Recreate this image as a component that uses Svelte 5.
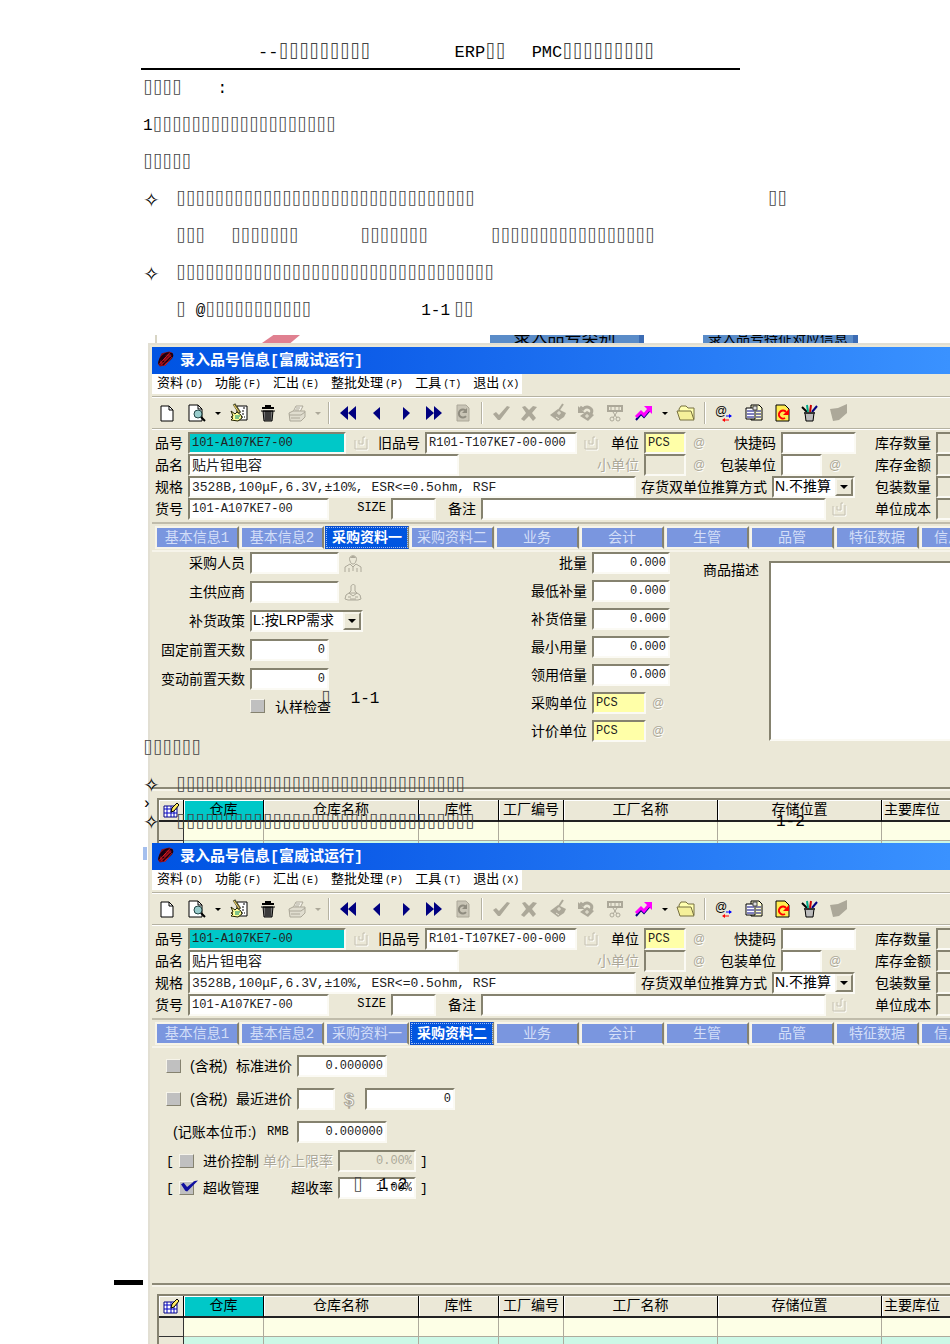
<script lang="ts">
	/**
	 * ERP manual page: document text with two pasted views of the
	 * item master window (purchasing tab one and tab two).
	 */

	interface Field {
		label: string;
		lw: number; // label width
		w: number; // control width
		value?: string;
		kind?: 'text' | 'key' | 'unit' | 'off' | 'select' | 'spec' | 'cjk';
		icon?: string;
		iw?: number; // icon slot width
		dim?: boolean;
		num?: boolean;
		latin?: boolean;
	}

	// Missing-glyph boxes, as the document prints them
	const box = (n: number) => '⌷'.repeat(n);

	const header = [
		{ gap: 258, text: '--', boxes: 9 },
		{ gap: 84, text: 'ERP', boxes: 2 },
		{ gap: 26, text: 'PMC', boxes: 9 }
	];

	interface Run {
		gap: number;
		text?: string;
		boxes?: number;
	}

	const lines: { bullet?: boolean; indent?: boolean; runs: Run[] }[] = [
		{ runs: [{ gap: 0, boxes: 4 }, { gap: 36, text: ':' }] },
		{ runs: [{ gap: 0, text: '1', boxes: 19 }] },
		{ runs: [{ gap: 0, boxes: 5 }] },
		{ bullet: true, runs: [{ gap: 0, boxes: 31 }, { gap: 293, boxes: 2 }] },
		{
			indent: true,
			runs: [
				{ gap: 0, boxes: 3 },
				{ gap: 26, boxes: 7 },
				{ gap: 62, boxes: 7 },
				{ gap: 63, boxes: 17 }
			]
		},
		{ bullet: true, runs: [{ gap: 0, boxes: 33 }] },
		{
			indent: true,
			runs: [
				{ gap: 0, boxes: 1 },
				{ gap: 10, text: '@', boxes: 11 },
				{ gap: 110, text: '1-1' },
				{ gap: 4, boxes: 2 }
			]
		}
	];

	const menus = [
		['资料', '(D)'],
		['功能', '(F)'],
		['汇出', '(E)'],
		['整批处理', '(P)'],
		['工具', '(T)'],
		['退出', '(X)']
	];

	const shapes: Record<string, string> = {
		new: '<path d="M4 3h8l4 4v11H4z" fill="#fff" stroke="#000"/><path d="M12 3v4h4" fill="none" stroke="#000"/>',
		preview:
			'<path d="M2 2h9l4 4v12H2z" fill="#fff" stroke="#000"/><path d="M11 2v4h4" fill="none" stroke="#000"/><circle cx="11" cy="11" r="4" fill="#9cc" stroke="#244"/><path d="M14 14l4 4" stroke="#000" stroke-width="2"/>',
		caret: '<path d="M7 9h6l-3 3z" fill="#000"/>',
		caretOff: '<path d="M7 9h6l-3 3z" fill="#aca899"/>',
		edit: '<path d="M8 3h10v14H8z" fill="#fff" stroke="#000"/><path d="M14 5h2M13 8h3M13 11h3M12 14h4" stroke="#000" stroke-dasharray="2 1"/><path d="M2 8l4 3 2-2 4 3 1 3-4 3-7-1 2-2-2-1 2-1z" fill="#ff9" stroke="#220"/><path d="M5 1l6 9" stroke="#553" stroke-width="3"/><path d="M5 2l5 7" stroke="#fd6"/><path d="M6 13h5M6 15h4" stroke="#087"/>',
		trash:
			'<path d="M4 5h12M8 5V3h4v2" fill="none" stroke="#000" stroke-width="2"/><path d="M5 8h10l-1 10H6z" fill="#777" stroke="#000"/><path d="M8 8v9M10 8v9M12 8v9" stroke="#000"/><path d="M3 8h14" stroke="#000"/>',
		print:
			'<path d="M6 9l3-6h7l-3 6" fill="#f5f3ea" stroke="#aca899"/><path d="M2 10l4-2h12v6l-4 4H3z" fill="#e0ddcf" stroke="#aca899"/><path d="M2 12h12l4-3M4 15h9M9 5h4M8 7h4" fill="none" stroke="#aca899"/>',
		first: '<path d="M10 3v14l-8-7zM18 3v14l-8-7z" fill="#000080"/>',
		prev: '<path d="M13 4v13l-7-7z" fill="#000080"/>',
		next: '<path d="M7 4v13l7-7z" fill="#000080"/>',
		last: '<path d="M2 3v14l8-7zM10 3v14l8-7z" fill="#000080"/>',
		redoOff:
			'<path d="M4 2h9l3 3v13H4z" fill="#c9c5b6" stroke="#aca899"/><path d="M13 13a4 4 0 1 1 0-5" fill="none" stroke="#8f8c7f" stroke-width="2"/><path d="M14 5v5h-5z" fill="#8f8c7f"/>',
		check: '<path d="M2 11l3-2 3 3 8-9 3 1-10 13H7z" fill="#aca899"/>',
		cross: '<path d="M3 4l3-1 4 4 4-4 4 1-5 6 4 5-3 3-4-5-5 5-3-2 5-6z" fill="#aca899"/>',
		tagOff:
			'<path d="M2 12l8-6 8 4-2 4-6 4z" fill="#aca899"/><path d="M11 7l4-6" stroke="#aca899" stroke-width="2"/><path d="M9 10h4M11 8v4M8 14l3 2" stroke="#ece9d8"/>',
		undoOff:
			'<path d="M4 4l3 2c4-4 11-1 8 5" fill="none" stroke="#aca899" stroke-width="3"/><path d="M2 3v7h7z" fill="#aca899"/><path d="M4 13l7-5 7 4-6 6z" fill="#aca899"/><path d="M9 13h4M11 11v4" stroke="#ece9d8"/>',
		cutOff:
			'<path d="M3 3h14v5H3z" fill="none" stroke="#aca899" stroke-width="2"/><path d="M6 3v5M10 3v5M14 3v5M8 9l4 6M12 9l-4 6" stroke="#aca899"/><circle cx="7" cy="16" r="2" fill="none" stroke="#aca899"/><circle cx="13" cy="16" r="2" fill="none" stroke="#aca899"/>',
		chart:
			'<path d="M2 17l5-6 3 3 6-7" fill="none" stroke="#000080" stroke-width="2"/><path d="M2 14l5-5 3 3 5-6" fill="none" stroke="#f0f" stroke-width="3"/><path d="M10 3h8v8z" fill="#f0f"/>',
		folder:
			'<path d="M3 6l2-3h5l2 2h6v11H4z" fill="#ffffb0" stroke="#777040"/><path d="M1 8h14l3 9H4z" fill="#f5f09a" stroke="#777040"/>',
		mail: '<text x="1" y="12" font-family="Liberation Sans" font-size="12">@</text><path d="M12 13h5" stroke="#00f"/><path d="M15 11l3 2-3 2z" fill="#00f"/><path d="M10 17h5" stroke="red"/><path d="M11 15l-3 2 3 2z" fill="red"/>',
		docs: '<path d="M7 2h8l3 3v12H7z" fill="#ffc" stroke="#000"/><path d="M2 5h9v11H2z" fill="#fff" stroke="#000"/><path d="M3 8h7M3 11h7M3 14h7M12 8h5M12 11h5M12 14h5" stroke="#000080"/><path d="M9 3h4v4H9z" fill="#ddd" stroke="#444"/>',
		refresh:
			'<path d="M4 2h9l4 4v12H4z" fill="#ffec50" stroke="#000"/><path d="M13 15a4 4 0 1 1 1-6" fill="none" stroke="red" stroke-width="2"/><path d="M17 6v6h-6z" fill="red"/>',
		pens: '<path d="M5 10h9l-1 8H6z" fill="#bbb" stroke="#000"/><path d="M7 9L2 4" stroke="#000" stroke-width="2"/><path d="M8 9L7 2" stroke="#0a8" stroke-width="2"/><path d="M10 9l1-7" stroke="#c00" stroke-width="2"/><path d="M12 9l5-6" stroke="#000080" stroke-width="2"/><path d="M4 10h11" stroke="#333" stroke-width="2"/>',
		flag: '<path d="M1 6l8-1 9-4v9l-8 7-6 1z" fill="#aca899"/>',
		pick: '<path d="M4 8v9h12V7M8 8v4h4V5h2" fill="none" stroke="#fff"/><path d="M3 7v9h12V6M7 7v4h4V4h2" fill="none" stroke="#c4c0b0"/>',
		at: '<text x="5" y="15" font-family="Liberation Sans" font-size="12" fill="#fff">@</text><text x="4" y="14" font-family="Liberation Sans" font-size="12" fill="#aca899">@</text>',
		person:
			'<path d="M7 8c-3-7 9-7 6 0-1 4-5 4-6 0zM2 19v-5l5-3 3 3 3-3 5 3v5M6 19v-4M14 19v-4M10 14v4" fill="none" stroke="#aca899"/><path d="M7 5c2-3 5-2 6 0z" fill="#aca899"/>',
		vendor:
			'<path d="M8 9V4c1-2 4-2 4 0v5l2 2H6zM2 17l1-4 3-2 4 3 4-3 3 2 1 4-3 1H5zM5 15h3M12 15h3M7 17h6" fill="none" stroke="#aca899"/>',
		coin: '<text x="5" y="17" font-family="Liberation Sans" font-weight="bold" font-size="18" fill="#fff" stroke="#aca899">$</text>'
	};

	const tools: [string, number, string][] = [
		['new', 30, '新增'],
		['preview', 30, '查询'],
		['caret', 12, '查询选项'],
		['edit', 30, '修改'],
		['trash', 28, '删除'],
		['print', 30, '打印'],
		['caretOff', 12, '打印选项'],
		['sep', 10, ''],
		['first', 28, '首笔'],
		['prev', 30, '上一笔'],
		['next', 28, '下一笔'],
		['last', 28, '末笔'],
		['redoOff', 30, '重新查询'],
		['sep', 8, ''],
		['check', 30, '确认'],
		['cross', 26, '取消'],
		['tagOff', 32, '审核'],
		['undoOff', 24, '撤销审核'],
		['cutOff', 34, '作废'],
		['chart', 24, '分析'],
		['caret', 18, '分析选项'],
		['folder', 24, '打开'],
		['sep', 14, ''],
		['mail', 24, '邮件'],
		['docs', 36, '复制'],
		['refresh', 20, '更新'],
		['pens', 36, '工具'],
		['flag', 22, '标记']
	];

	const headRows: Field[][] = [
		[
			{ label: '品号', lw: 36, w: 158, value: '101-A107KE7-00', kind: 'key', icon: 'pick', iw: 32 },
			{ label: '旧品号', lw: 47, w: 152, value: 'R101-T107KE7-00-000', icon: 'pick', iw: 29 },
			{ label: '单位', lw: 38, w: 42, value: 'PCS', kind: 'unit', icon: 'at', iw: 26 },
			{ label: '快捷码', lw: 69, w: 75 },
			{ label: '库存数量', lw: 80, w: 80, kind: 'off' }
		],
		[
			{ label: '品名', lw: 36, w: 271, value: '贴片钽电容', kind: 'cjk' },
			{ label: '小单位', lw: 185, w: 42, kind: 'off', dim: true, icon: 'at', iw: 26 },
			{ label: '包装单位', lw: 69, w: 41, icon: 'at', iw: 26 },
			{ label: '库存金额', lw: 88, w: 80, kind: 'off' }
		],
		[
			{ label: '规格', lw: 36, w: 448, value: '3528B,100μF,6.3V,±10%, ESR<=0.5ohm, RSF', kind: 'spec' },
			{ label: '存货双单位推算方式', lw: 136, w: 83, value: 'N.不推算', kind: 'select' },
			{ label: '包装数量', lw: 81, w: 80, kind: 'off' }
		],
		[
			{ label: '货号', lw: 36, w: 141, value: '101-A107KE7-00' },
			{ label: 'SIZE', lw: 62, w: 45, latin: true },
			{ label: '备注', lw: 45, w: 345, icon: 'pick', iw: 28 },
			{ label: '单位成本', lw: 82, w: 80, kind: 'off' }
		]
	];

	const tabs = ['基本信息1', '基本信息2', '采购资料一', '采购资料二', '业务', '会计', '生管', '品管', '特征数据', '信息传递'];

	const buying: Field[] = [
		{ label: '采购人员', lw: 98, w: 89, icon: 'person', iw: 28 },
		{ label: '主供应商', lw: 98, w: 89, icon: 'vendor', iw: 28 },
		{ label: '补货政策', lw: 98, w: 113, value: 'L:按LRP需求', kind: 'select' },
		{ label: '固定前置天数', lw: 98, w: 79, value: '0', num: true },
		{ label: '变动前置天数', lw: 98, w: 79, value: '0', num: true }
	];

	const amounts: Field[] = [
		{ label: '批量', lw: 72, w: 78, value: '0.000', num: true },
		{ label: '最低补量', lw: 72, w: 78, value: '0.000', num: true },
		{ label: '补货倍量', lw: 72, w: 78, value: '0.000', num: true },
		{ label: '最小用量', lw: 72, w: 78, value: '0.000', num: true },
		{ label: '领用倍量', lw: 72, w: 78, value: '0.000', num: true },
		{ label: '采购单位', lw: 72, w: 54, value: 'PCS', kind: 'unit', icon: 'at', iw: 26 },
		{ label: '计价单位', lw: 72, w: 54, value: 'PCS', kind: 'unit', icon: 'at', iw: 26 }
	];

	const columns: [string, number][] = [
		['仓库', 80],
		['仓库名称', 155],
		['库性', 80],
		['工厂编号', 65],
		['工厂名称', 154],
		['存储位置', 164]
	];
</script>

{#snippet glyph(name: string)}
	<svg class="glyph" viewBox="0 0 20 20" aria-hidden="true">{@html shapes[name]}</svg>
{/snippet}

{#snippet printed(run: Run)}
	<span style:margin-left="{run.gap}px">{run.text ?? ''}<span class="missing">{box(run.boxes ?? 0)}</span></span>
{/snippet}

{#snippet field(id: string, f: Field)}
	<div class="field">
		<label class:dim={f.dim} class:latin={f.latin} for="{id}-{f.label}" style:width="{f.lw}px">{f.label}</label>
		{#if f.kind === 'select'}
			<span class="combo" style:width="{f.w}px">
				<select id="{id}-{f.label}"><option>{f.value}</option></select>
				<span class="combo-arrow">
					<svg width="8" height="4" viewBox="0 0 8 4"><path d="M0 0h8L4 4z" /></svg>
				</span>
			</span>
		{:else}
			<input
				id="{id}-{f.label}"
				class="box {f.kind ?? 'text'}"
				class:num={f.num}
				type="text"
				value={f.value ?? ''}
				style:width="{f.w}px"
			/>
		{/if}
		{#if f.icon}
			<span class="slot" style:width="{f.iw}px">{@render glyph(f.icon)}</span>
		{/if}
	</div>
{/snippet}

{#snippet purchaseOne()}
	<div class="panel one">
		<div class="buying">
			{#each buying as f}
				{@render field('buy', f)}
			{/each}
			<label class="sample"><input class="tick" type="checkbox" />认样检查</label>
		</div>
		<div class="amounts">
			{#each amounts as f}
				{@render field('amt', f)}
			{/each}
		</div>
		<div class="describe">
			<label for="describe">商品描述</label>
			<textarea id="describe"></textarea>
		</div>
	</div>
{/snippet}

{#snippet purchaseTwo()}
	<div class="panel two">
		<div class="prices">
			<div class="price-row">
				<input class="tick" type="checkbox" id="std" />
				<label class="tax" for="std">(含税)</label>
				<label for="std-price">标准进价</label>
				<input class="box num wide" id="std-price" value="0.000000" />
			</div>
			<div class="price-row">
				<input class="tick" type="checkbox" id="recent" />
				<label class="tax" for="recent">(含税)</label>
				<label for="recent-cur">最近进价</label>
				<input class="box currency" id="recent-cur" />
				<span class="coin">{@render glyph('coin')}</span>
				<input class="box num wide" aria-label="最近进价金额" value="0" />
			</div>
			<div class="price-row">
				<label class="book" for="book">(记账本位币:)</label>
				<span class="rmb">RMB</span>
				<input class="box num wide" id="book" value="0.000000" />
			</div>
		</div>
		<div class="limits">
			<div class="limit-row">
				<span class="bracket">[</span>
				<input class="tick" type="checkbox" id="ctl" />
				<label class="limit-name" for="ctl">进价控制</label>
				<label class="limit-rate dim" for="cap">单价上限率</label>
				<input class="box num off rate" id="cap" value="0.00%" disabled />
				<span class="bracket">]</span>
			</div>
			<div class="limit-row">
				<span class="bracket">[</span>
				<input class="tick" type="checkbox" id="over" checked />
				<label class="limit-name" for="over">超收管理</label>
				<label class="limit-rate" for="over-rate">超收率</label>
				<input class="box num rate" id="over-rate" value="1.00%" />
				<span class="bracket">]</span>
			</div>
		</div>
	</div>
{/snippet}

{#snippet erpWindow(id: string, active: number)}
	<section class="window" class:lower={active === 3}>
		<div class="titlebar">
			<svg class="logo" viewBox="0 0 18 18" aria-hidden="true">
				<path d="M5 3l8-2 4 2-3 7-5 6-6 1-2-3 2-7z" fill="#8b0a1a" />
				<path d="M3 15C0 10 8 2 14 3s-1 9-6 9-2-6 3-6M6 15l8-8" fill="none" stroke="#1a0010" stroke-width="2" />
				<path d="M2 15L14 2M5 15l9-9M8 16l8-9" fill="none" stroke="#e02020" />
			</svg>
			<h2>录入品号信息[富威试运行]</h2>
		</div>
		<nav class="menubar">
			<div class="menus">
				{#each menus as [name, key]}
					<button type="button">{name}<span>{key}</span></button>
				{/each}
			</div>
		</nav>
		<div class="toolbar">
			{#each tools as [name, width, title]}
				{#if name === 'sep'}
					<span class="sep" style:width="{width}px"></span>
				{:else}
					<button type="button" aria-label={title} style:width="{width}px">{@render glyph(name)}</button>
				{/if}
			{/each}
		</div>
		<div class="head">
			{#each headRows as row}
				<div class="head-row">
					{#each row as f}
						{@render field(id, f)}
					{/each}
				</div>
			{/each}
		</div>
		<div class="tabs" role="tablist">
			{#each tabs as tab, i}
				<button type="button" role="tab" aria-selected={i === active} class:active={i === active}>{tab}</button>
			{/each}
		</div>
		{#if active === 2}
			{@render purchaseOne()}
		{:else}
			{@render purchaseTwo()}
		{/if}
		<div class="grid-area">
			<table>
				<thead>
					<tr>
						<th class="corner">
							<svg width="16" height="16" viewBox="0 0 16 16" aria-hidden="true">
								<path d="M1 4h13v11H1z" fill="#fff" stroke="#000080" />
								<path d="M1 7h13M1 11h13M4 4v11M8 4v11M11 4v11" stroke="#0000c0" />
								<path d="M8 10l1-4 5-5 2 2-5 6z" fill="#ffe860" stroke="#000" />
							</svg>
						</th>
						{#each columns as [name, width], i}
							<th class:key={i === 0} style:width="{width}px">{name}</th>
						{/each}
						<th class="last">主要库位</th>
					</tr>
				</thead>
				<tbody>
					{#each [0, 1] as r}
						<tr>
							<td class="corner"></td>
							{#each columns as c}
								<td></td>
							{/each}
							<td></td>
						</tr>
					{/each}
				</tbody>
			</table>
		</div>
	</section>
{/snippet}

<main class="page">
	<header class="doc-header">
		{#each header as run}
			{@render printed(run)}
		{/each}
	</header>

	<div class="doc-text">
		{#each lines as line}
			<p class:indent={line.indent}>
				{#if line.bullet}<span class="bullet">✧</span>{/if}
				{#each line.runs as run}
					{@render printed(run)}
				{/each}
			</p>
		{/each}
	</div>

	<figure>
		<div class="backdrop">
			<span class="ribbon"></span>
			<span class="node first-node">录入品号类别</span>
			<span class="node second-node">录入品号特征对应信息</span>
		</div>
		{@render erpWindow('a', 2)}
		<figcaption class="over caption-one"><span class="missing">{box(1)}</span><span>1-1</span></figcaption>
		<p class="over note-head missing">{box(6)}</p>
		<p class="over note-one"><span class="bullet">✧</span><span class="missing">{box(30)}</span></p>
		<p class="over note-two"><span class="bullet">✧</span><span class="missing">{box(31)}</span></p>
		<span class="over note-ref">1-2</span>
		<span class="over mark">›</span>
	</figure>

	<figure class="second">
		{@render erpWindow('b', 3)}
		<figcaption class="over caption-two"><span class="missing">{box(1)}</span><span>1-2</span></figcaption>
		<span class="over rule"></span>
		<span class="over scrap"></span>
	</figure>
</main>

<style>
	:global(body) {
		margin: 0;
		background: #fff;
	}

	* {
		box-sizing: border-box;
	}

	.page {
		height: 100vh;
		overflow: hidden;
		color: #000;
		font-family: 'Liberation Mono', 'DejaVu Sans Mono', 'Noto Sans CJK SC', monospace;
		font-size: 16px;
	}

	/* Document text */
	.doc-header {
		position: relative;
		display: flex;
		height: 70px;
		padding-top: 36px;
		font-size: 17px;
		line-height: 34px;
		white-space: pre;
	}

	.doc-header::after {
		content: '';
		position: absolute;
		left: 141px;
		bottom: 0;
		width: 599px;
		height: 2px;
		background: #000;
	}

	.doc-text {
		padding: 1px 0 5px 143px;
	}

	p {
		display: flex;
		margin: 0;
		line-height: 37px;
		white-space: pre;
	}

	.doc-text p {
		height: 37px;
	}

	p.indent {
		padding-left: 33px;
	}

	.bullet {
		width: 33px;
		font-family: 'DejaVu Sans', sans-serif;
		font-size: 20px;
	}

	.missing {
		color: #444;
		font-family: 'DejaVu Sans Mono', monospace;
		line-height: 20px;
	}

	/* Pasted views */
	figure {
		position: relative;
		margin: 0;
		padding-left: 148px;
		overflow: hidden;
	}

	figure.second {
		margin-top: -17px;
	}

	.backdrop {
		display: flex;
		height: 8px;
		margin-left: 7px;
		border-left: 2px solid #d8d5c4;
		overflow: hidden;
	}

	.ribbon {
		width: 38px;
		margin: 0 190px 0 105px;
		background: #e08090;
		clip-path: polygon(30% 0, 100% 0, 75% 100%, 0 100%);
	}

	.node {
		display: flex;
		align-items: center;
		justify-content: center;
		height: 8px;
		overflow: hidden;
		background: #5a8cc8;
		border-right: 5px solid #3c6cb4;
		font-size: 14px;
		line-height: 16px;
		white-space: nowrap;
	}

	.first-node {
		width: 154px;
		margin-right: 59px;
		font-size: 17px;
	}

	.second-node {
		width: 155px;
	}

	.window {
		position: relative;
		border-left: 2px solid #e2dfd3;
		border-top: 2px solid #e2dfd3;
		padding: 2px 0 0 2px;
		background: #ebe8d7;
		font-size: 14px;
		white-space: nowrap;
		overflow: hidden;
	}

	.window.lower {
		border-top: 0;
		padding-top: 0;
	}

	.titlebar {
		display: flex;
		align-items: center;
		gap: 6px;
		height: 27px;
		padding: 0 0 3px 5px;
		background: linear-gradient(90deg, #0054e3, #0c5ce8 25%, #3a92ff);
	}

	.logo {
		width: 17px;
		height: 18px;
	}

	h2 {
		margin: 0;
		color: #fff;
		font-size: 15px;
		font-weight: bold;
	}

	.menubar {
		height: 23px;
		border-bottom: 1px solid #b5b2a2;
	}

	.menus {
		display: flex;
		gap: 12px;
		width: 370px;
		height: 20px;
		padding-left: 5px;
		background: #fff;
	}

	button {
		padding: 0;
		border: 0;
		background: none;
		color: inherit;
		font-family: inherit;
	}

	.menus button {
		font-size: 13px;
		line-height: 18px;
	}

	.menus span {
		margin-left: 2px;
		font-size: 10px;
	}

	.toolbar {
		display: flex;
		align-items: center;
		height: 32px;
		border-top: 1px solid #fff;
		border-bottom: 1px solid #b5b2a2;
	}

	.toolbar button {
		display: flex;
		flex: none;
		justify-content: center;
	}

	.glyph {
		flex: none;
		width: 20px;
		height: 20px;
	}

	.sep {
		flex: none;
		height: 22px;
		background: linear-gradient(90deg, #b5b2a2 50%, #fff 50%) center / 2px 100% no-repeat;
	}

	.head {
		height: 95px;
		padding-top: 2px;
		border-top: 1px solid #fff;
		border-bottom: 2px solid #c0bcab;
	}

	.head-row {
		display: flex;
	}

	.field {
		display: flex;
		flex: none;
		align-items: center;
		height: 22px;
	}

	.field label {
		flex: none;
		padding: 0 5px 2px 0;
		text-align: right;
	}

	.field .latin {
		font-size: 12px;
	}

	.dim {
		color: #aca899;
		text-shadow: 1px 1px #fff;
	}

	.box,
	.combo,
	textarea {
		flex: none;
		height: 22px;
		border: 2px solid;
		border-color: #85826f #fbfaf4 #fbfaf4 #85826f;
		background: #fff;
	}

	.box {
		padding: 0 2px;
		border-radius: 0;
		color: #222;
		font-family: inherit;
		font-size: 12px;
		outline: 0;
	}

	.box.num {
		text-align: right;
	}

	.box.key {
		background: #00c8c8;
	}

	.box.unit {
		background: #ffffa8;
	}

	.box.off {
		background: #ebe8d7;
		color: #aca899;
	}

	.box.spec {
		font-size: 13px;
	}

	.box.cjk {
		padding-bottom: 2px;
		font-size: 14px;
	}

	.slot {
		display: flex;
		justify-content: center;
	}

	.combo {
		display: flex;
	}

	select {
		flex: 1;
		min-width: 0;
		padding: 0 0 2px 1px;
		border: 0;
		appearance: none;
		background: #fff;
		color: #000;
		font-family: 'Liberation Sans', 'Noto Sans CJK SC', sans-serif;
		font-size: 14px;
		line-height: 16px;
	}

	.combo-arrow {
		display: flex;
		align-items: center;
		justify-content: center;
		width: 18px;
		border: 2px solid;
		border-color: #f6f4ea #85826f #85826f #f6f4ea;
		background: #ebe8d7;
	}

	.tabs {
		display: flex;
		gap: 1px;
		height: 26px;
		padding: 2px 0 1px 3px;
	}

	.tabs button {
		flex: none;
		width: 84px;
		border: 2px solid;
		border-color: #f6f4ea #85826f #f6f4ea #f6f4ea;
		background: #7a96df;
		color: #d3def8;
		font-size: 14px;
		line-height: 18px;
	}

	.tabs .active {
		border-color: #0a50d0 #85826f #0a50d0 #0a50d0;
		outline: 1px dotted #9cc0f8;
		outline-offset: -2px;
		background: #0055e0;
		color: #fff;
		font-weight: bold;
	}

	.panel {
		height: 239px;
		border-top: 2px solid #f6f4ea;
		border-bottom: 2px solid #8c8976;
	}

	.one {
		display: flex;
	}

	.buying {
		display: flex;
		flex: none;
		flex-direction: column;
		gap: 7px;
		width: 368px;
	}

	.sample {
		display: flex;
		align-items: center;
		gap: 10px;
		height: 18px;
		padding-left: 98px;
	}

	.tick {
		flex: none;
		width: 15px;
		height: 14px;
		margin: 0;
		border: 1px solid;
		border-color: #f6f4ea #85826f #85826f #f6f4ea;
		appearance: none;
		background: #c0c0c0;
	}

	.tick:checked {
		position: relative;
	}

	.tick:checked::after {
		content: '';
		position: absolute;
		left: 1px;
		top: -2px;
		width: 17px;
		height: 12px;
		background: #1010a0;
		clip-path: polygon(0 35%, 16% 22%, 36% 58%, 80% 8%, 100% 5%, 36% 95%, 25% 90%);
	}

	.amounts {
		display: flex;
		flex: none;
		flex-direction: column;
		gap: 6px;
		width: 150px;
	}

	.describe {
		display: flex;
		flex: none;
		padding-top: 9px;
	}

	.describe label {
		width: 99px;
		padding-right: 10px;
		line-height: 20px;
		text-align: right;
	}

	textarea {
		width: 400px;
		height: 180px;
		resize: none;
	}

	.two {
		padding: 7px 0 0 14px;
	}

	.prices {
		display: flex;
		flex-direction: column;
		gap: 11px;
	}

	.price-row,
	.limit-row {
		display: flex;
		align-items: center;
		height: 22px;
	}

	.price-row label,
	.limit-row label {
		padding-bottom: 2px;
	}

	.tax {
		width: 46px;
		margin-left: 9px;
		font-family: 'Liberation Sans', 'Noto Sans CJK SC', sans-serif;
	}

	.price-row .box {
		margin-left: 5px;
	}

	.wide {
		width: 90px;
	}

	.currency {
		width: 38px;
	}

	.coin {
		display: flex;
		margin: 0 1px 0 4px;
	}

	.book {
		width: 97px;
		padding-left: 7px;
		font-family: 'Liberation Sans', 'Noto Sans CJK SC', sans-serif;
	}

	.rmb {
		width: 25px;
		margin-left: 4px;
		font-size: 12px;
	}

	.limits {
		display: flex;
		flex-direction: column;
		gap: 5px;
		padding-top: 7px;
	}

	.bracket {
		width: 13px;
		font-size: 13px;
	}

	.limit-name {
		width: 56px;
		margin-left: 9px;
	}

	.limit-rate {
		width: 79px;
		padding-right: 5px;
		text-align: right;
	}

	.rate {
		width: 78px;
		margin-right: 4px;
	}

	.grid-area {
		padding: 7px 0 0 5px;
		border-top: 2px solid #f6f4ea;
	}

	table {
		width: 900px;
		border-collapse: separate;
		border-spacing: 0;
		border: 2px solid #85826f;
		border-width: 2px 0 0 2px;
		table-layout: fixed;
	}

	th {
		height: 22px;
		padding: 0;
		border-right: 1px solid #000;
		border-bottom: 2px solid #222;
		box-shadow: inset 1px 1px #fff;
		background: #ebe8d7;
		font-size: 14px;
		font-weight: normal;
		line-height: 20px;
	}

	th.key {
		background: #00c8c8;
	}

	th.corner {
		width: 25px;
	}

	th.corner svg {
		display: block;
		margin: 0 auto;
	}

	th.last {
		padding-left: 2px;
		text-align: left;
	}

	td {
		height: 19px;
		padding: 0;
		border-right: 1px solid #aeab9c;
		border-bottom: 1px solid #aeab9c;
		background: #fdffe6;
	}

	tr:nth-child(2) td {
		background: #ccf8e6;
	}

	tr td.corner {
		border-color: #333;
		background: #ebe8d7;
	}

	/* Document text that runs over the pasted views */
	.over {
		position: absolute;
		line-height: 20px;
	}

	.caption-one {
		left: 321px;
		top: 354px;
		display: flex;
		gap: 20px;
	}

	.caption-two {
		left: 353px;
		top: 332px;
		display: flex;
		gap: 16px;
	}

	.note-head {
		left: 143px;
		top: 403px;
	}

	.note-one {
		left: 143px;
		top: 440px;
	}

	.note-two {
		left: 143px;
		top: 477px;
	}

	.note-ref {
		left: 776px;
		top: 477px;
	}

	.mark {
		left: 142px;
		top: 459px;
	}

	.rule {
		left: 114px;
		top: 437px;
		width: 29px;
		height: 5px;
		background: #000;
	}

	.scrap {
		left: 143px;
		top: 4px;
		width: 4px;
		height: 13px;
		background: #a4bfee;
	}
</style>
